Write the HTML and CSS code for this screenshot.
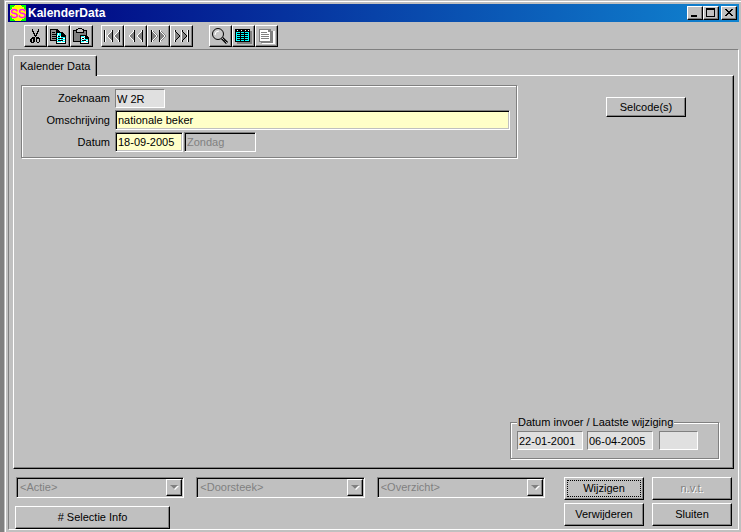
FILE: index.html
```html
<!DOCTYPE html>
<html lang="nl">
<head>
    <meta charset="utf-8">
    <title>KalenderData</title>
    <link rel="stylesheet" href="styles.css">
</head>
<body>
    <div class="window">
        <header class="titlebar">
            <svg class="logo" viewBox="0 0 16 16">
                <rect width="16" height="16" fill="#0f0"/>
                <circle cx="8" cy="8" r="8" fill="#ff0"/>
                <text x="0" y="13">SS</text>
            </svg>
            <h1>KalenderData</h1>
            <div class="caption-buttons">
                <button type="button" aria-label="Minimaliseren"><svg width="12" height="10" viewBox="0 0 12 10"><path d="M2 7h6v2H2z"/></svg></button>
                <button type="button" aria-label="Maximaliseren"><svg width="12" height="10" viewBox="0 0 12 10"><path fill-rule="evenodd" d="M1 0h9v9H1zM2 2v6h7V2z"/></svg></button>
                <button type="button" class="close" aria-label="Sluiten"><svg width="12" height="10" viewBox="0 0 12 10"><path d="M2 1h2v1h1v1h2V2h1V1h2v1H9v1H8v1H7v1h1v1h1v1h1v1H8V7H7V6H5v1H4v1H2V7h1V6h1V5h1V4H4V3H3V2H2z"/></svg></button>
            </div>
        </header>

        <div class="toolbar">
            <div class="tool-group">
                <button type="button" aria-label="Knippen">
                    <svg viewBox="0 0 19 18">
                        <path d="M6 2h1v2h1v2h1v2h1V6h1V4h1V2h1v3h-1v2h-1v2h-1v1H9V9H8V7H7V5H6z"/>
                        <path fill-rule="evenodd" d="M6 10h3v5H8v1H5v-1H4v-3h1v-1h1zM6 12v3h1v-3zM10 10h3v1h1v4h-1v1h-2v-1h-1zM11 12v3h2v-3z"/>
                    </svg>
                </button>
                <button type="button" aria-label="Kopiëren">
                    <svg viewBox="0 0 19 18">
                        <path d="M1 2h7l3 3v9H1z"/>
                        <path fill="#909090" d="M2 3h5v3h3v7H2z"/>
                        <path d="M3 5h3v1H3zM3 7h5v1H3zM3 9h5v1H3zM3 11h5v1H3z"/>
                        <path d="M7 5h6l4 4v8H7z"/>
                        <path fill="#fff" d="M8 6h4v4h4v6H8z"/>
                        <path fill="#0ff" d="M8 6h1v2H8zM10 6h2v2h-2zM9 8h3v1H9zM8 10h3v1H8zM12 10h4v1h-4zM8 12h3v1H8zM12 12h4v1h-4zM8 14h4v1H8zM13 14h3v1h-3z"/>
                        <path d="M9 9h2v1H9zM9 11h5v1H9zM9 13h5v1H9z"/>
                    </svg>
                </button>
                <button type="button" aria-label="Plakken">
                    <svg viewBox="0 0 19 18">
                        <path d="M1 3h14v12H1z"/>
                        <path fill="#808080" d="M2 4h12v10H2z"/>
                        <path d="M6 1h4v1h2v4H4V2h2z"/>
                        <path fill="#c0c0c0" d="M6 2h4v1h1v2H5V3h1z"/>
                        <path d="M8 8h6l3 3v6H8z"/>
                        <path fill="#fff" d="M9 9h4v3h3v4H9z"/>
                        <path fill="#0ff" d="M9 9h3v1H9zM12 10h1v1h-1zM9 12h1v1H9zM12 12h4v1h-4zM9 14h3v1H9zM14 14h2v1h-2z"/>
                        <path d="M10 11h2v1h-2zM10 13h4v1h-4z"/>
                    </svg>
                </button>
            </div>
            <div class="tool-group">
                <button type="button" aria-label="Eerste">
                    <svg viewBox="0 0 19 18">
                        <path fill="#808080" d="M9 3v12L3 9zM16 3v12l-6-6z"/>
                        <path d="M1 3h1v12H1zM9 3h1v12H9zM16 3h1v12h-1z"/>
                        <path class="light" d="M2 3h1v12H2zM8 3h1v2H8zM7 5h1v1H7zM6 6h1v1H6zM5 7h1v1H5zM4 8h1v2H4zM5 10h1v1H5zM6 11h1v1H6zM7 12h1v1H7zM8 13h1v2H8zM15 3h1v2h-1zM14 5h1v1h-1zM13 6h1v1h-1zM12 7h1v1h-1zM11 8h1v2h-1zM12 10h1v1h-1zM13 11h1v1h-1zM14 12h1v1h-1zM15 13h1v2h-1z"/>
                    </svg>
                </button>
                <button type="button" aria-label="Vorige">
                    <svg viewBox="0 0 19 18">
                        <path fill="#808080" d="M8 3v12L2 9zM16 3v12l-6-6z"/>
                        <path d="M8 3h1v12H8zM16 3h1v12h-1z"/>
                        <path class="light" d="M7 3h1v2H7zM6 5h1v1H6zM5 6h1v1H5zM4 7h1v1H4zM3 8h1v2H3zM4 10h1v1H4zM5 11h1v1H5zM6 12h1v1H6zM7 13h1v2H7zM15 3h1v2h-1zM14 5h1v1h-1zM13 6h1v1h-1zM12 7h1v1h-1zM11 8h1v2h-1zM12 10h1v1h-1zM13 11h1v1h-1zM14 12h1v1h-1zM15 13h1v2h-1z"/>
                    </svg>
                </button>
                <button type="button" aria-label="Volgende">
                    <svg viewBox="0 0 19 18">
                        <path fill="#808080" d="M3 3v12l6-6zM11 3v12l6-6z"/>
                        <path d="M2 3h1v12H2zM10 3h1v12h-1z"/>
                        <path class="light" d="M3 3h1v2H3zM4 5h1v1H4zM5 6h1v1H5zM6 7h1v1H6zM7 8h1v2H7zM6 10h1v1H6zM5 11h1v1H5zM4 12h1v1H4zM3 13h1v2H3zM11 3h1v2h-1zM12 5h1v1h-1zM13 6h1v1h-1zM14 7h1v1h-1zM15 8h1v2h-1zM14 10h1v1h-1zM13 11h1v1h-1zM12 12h1v1h-1zM11 13h1v2h-1z"/>
                    </svg>
                </button>
                <button type="button" aria-label="Laatste">
                    <svg viewBox="0 0 19 18">
                        <path fill="#808080" d="M3 3v12l5-6zM10 3v12l5-6z"/>
                        <path class="light" d="M2 3h1v12H2zM9 3h1v12H9zM15 3h1v12h-1z"/>
                        <path d="M3 3h1v2H3zM4 5h1v1H4zM5 6h1v1H5zM6 7h1v1H6zM7 8h1v2H7zM6 10h1v1H6zM5 11h1v1H5zM4 12h1v1H4zM3 13h1v2H3zM10 3h1v2h-1zM11 5h1v1h-1zM12 6h1v1h-1zM13 7h1v1h-1zM14 8h1v2h-1zM13 10h1v1h-1zM12 11h1v1h-1zM11 12h1v1h-1zM10 13h1v2h-1zM16 3h1v12h-1z"/>
                    </svg>
                </button>
            </div>
            <div class="tool-group">
                <button type="button" aria-label="Zoeken">
                    <svg class="smooth" viewBox="0 0 19 18">
                        <path stroke="#000" stroke-width="3" d="M11 11l5 5"/>
                        <path stroke="#fff" stroke-dasharray="1 1" d="M11 11l5 5"/>
                        <circle cx="7" cy="7" r="5.5" fill="#c8c8c8" stroke="#000"/>
                        <path fill="none" stroke="#fff" d="M4 8a4 4 0 0 1 4-4"/>
                    </svg>
                </button>
                <button type="button" aria-label="Tabel">
                    <svg viewBox="0 0 19 18">
                        <path fill="#808080" d="M3 4h15v13H3z"/>
                        <path d="M1 2h15v13H1z"/>
                        <path fill="#fff" d="M3 3h1v1H3zM7 3h1v1H7zM11 3h1v1h-1zM14 3h1v1h-1z"/>
                        <path fill="#0ff" d="M2 5h13v9H2z"/>
                        <path d="M3 6h3v1H3zM7 6h3v1H7zM11 6h3v1h-3zM3 8h3v1H3zM7 8h3v1H7zM11 8h3v1h-3zM3 10h3v1H3zM7 10h3v1H7zM11 10h3v1h-3zM3 12h3v1H3zM7 12h3v1H7zM11 12h3v1h-3zM6 5h1v9H6zM10 5h1v9h-1z"/>
                    </svg>
                </button>
                <button type="button" aria-label="Lijst" disabled>
                    <svg viewBox="0 0 19 18">
                        <path class="light" d="M5 4h13v13H5z"/>
                        <path fill="#808080" d="M4 4h12v12H4zM2 2h12v13H2z"/>
                        <path class="light" d="M3 3h10v11H3z"/>
                        <path fill="#808080" d="M4 5h6v1H4zM4 7h8v1H4zM4 9h8v1H4zM4 11h8v1H4zM11 3h2v2h-2z"/>
                    </svg>
                </button>
            </div>
        </div>

        <main class="client">
            <div class="tabs" role="tablist">
                <button type="button" class="tab" role="tab" aria-selected="true">Kalender Data</button>
            </div>
            <section class="panel">
                <div class="panel-top">
                    <div class="group">
                        <label for="zoeknaam">Zoeknaam</label>
                        <input id="zoeknaam" class="flat short" type="text" value="W 2R" readonly>
                        <label for="omschrijving">Omschrijving</label>
                        <input id="omschrijving" type="text" value="nationale beker">
                        <label for="datum">Datum</label>
                        <div class="date-row">
                            <input id="datum" class="date" type="text" value="18-09-2005">
                            <input class="day" type="text" value="Zondag" aria-label="Dag" disabled>
                        </div>
                    </div>
                    <button type="button" class="button selcode">Selcode(s)</button>
                </div>
                <fieldset class="changes">
                    <legend>Datum invoer / Laatste wijziging</legend>
                    <input class="flat" type="text" value="22-01-2001" aria-label="Datum invoer" readonly>
                    <input class="flat" type="text" value="06-04-2005" aria-label="Laatste wijziging" readonly>
                    <input class="flat initials" type="text" value="" aria-label="Gebruiker" readonly>
                </fieldset>
            </section>

            <footer class="footer">
                <div class="choices">
                    <div class="combos">
                        <div class="combo">
                            <select aria-label="Actie" disabled><option>&lt;Actie&gt;</option></select>
                            <span class="arrow"></span>
                        </div>
                        <div class="combo">
                            <select aria-label="Doorsteek" disabled><option>&lt;Doorsteek&gt;</option></select>
                            <span class="arrow"></span>
                        </div>
                        <div class="combo">
                            <select aria-label="Overzicht" disabled><option>&lt;Overzicht&gt;</option></select>
                            <span class="arrow"></span>
                        </div>
                    </div>
                    <button type="button" class="button info"># Selectie Info</button>
                </div>
                <div class="actions">
                    <button type="button" class="button default">Wijzigen</button>
                    <button type="button" class="button" disabled>n.v.t.</button>
                    <button type="button" class="button">Verwijderen</button>
                    <button type="button" class="button">Sluiten</button>
                </div>
            </footer>
        </main>
    </div>
</body>
</html>
```
FILE: styles.css
```css
* {
    box-sizing: border-box;
}
body {
    margin: 0;
    min-height: 100vh;
    display: flex;
    background: #c0c0c0;
    border-left: 4px solid #808080;
    color: #000;
}
body, button, input, select {
    font-family: "Liberation Sans", Arial, sans-serif;
    font-size: 11px;
    line-height: 13px;
}
button {
    padding: 0;
    color: #000;
    background: #c0c0c0;
    border: 1px solid;
    border-color: #fff #000 #000 #fff;
    box-shadow: inset -1px -1px #808080;
}
svg {
    display: block;
    shape-rendering: crispEdges;
}
.smooth {
    shape-rendering: auto;
}
.light {
    fill: #fff;
}

.window {
    flex: 1;
    display: flex;
    flex-direction: column;
    margin: 1px 0 0 1px;
    padding: 2px;
    border-top: 1px solid #fff;
    border-left: 1px solid #fff;
}

/* title bar */
.titlebar {
    display: flex;
    align-items: center;
    height: 18px;
    padding: 0 2px;
    background: linear-gradient(to right, #000080, #1084d0);
    color: #fff;
}
.logo {
    width: 16px;
    height: 16px;
}
.logo text {
    font-size: 12px;
    fill: #f0f;
    stroke: #f0f;
    stroke-width: .4px;
}
h1 {
    flex: 1;
    margin: 0 0 0 2px;
    font-size: 12px;
    line-height: 18px;
}
.caption-buttons {
    display: flex;
}
.caption-buttons button {
    width: 16px;
    height: 14px;
    padding: 1px;
}
.caption-buttons .close {
    margin-left: 2px;
}

/* toolbar */
.toolbar {
    display: flex;
    gap: 8px;
    padding: 3px 16px 2px;
}
.tool-group {
    display: flex;
}
.tool-group:last-child {
    margin-left: 8px;
}
.toolbar button {
    width: 23px;
    height: 22px;
    padding: 1px;
}
.toolbar svg {
    width: 19px;
    height: 18px;
}

/* tab and page */
.client {
    flex: 1;
    display: flex;
    flex-direction: column;
    padding: 5px 4px 0;
    border: 1px solid;
    border-color: #808080 #fff #fff #808080;
}
.tab {
    position: relative;
    display: block;
    height: 21px;
    margin-bottom: -1px;
    padding: 0 6px;
    border-bottom: 0;
    border-radius: 2px 2px 0 0;
    box-shadow: inset -1px 0 #808080;
}
.panel {
    flex: 1;
    display: flex;
    flex-direction: column;
    justify-content: space-between;
    padding: 9px 14px 9px 7px;
    border: 1px solid;
    border-color: #fff #000 #000 #fff;
    box-shadow: inset -1px -1px #808080;
}
.panel-top {
    display: flex;
    justify-content: space-between;
}
.group {
    flex: 1;
    max-width: 496px;
    display: grid;
    grid-template-columns: 88px 1fr;
    gap: 2px 5px;
    align-items: center;
    padding: 3px 6px 5px 0;
    border: 1px solid #808080;
    box-shadow: 1px 1px #fff, inset 1px 1px #fff;
}
.group label {
    text-align: right;
}
.selcode {
    width: 80px;
    height: 20px;
    margin: 12px 33px 0 16px;
}

/* fields */
input {
    height: 20px;
    min-width: 0;
    padding: 0 2px;
    color: #000;
    background: #ffffc8;
    border: 1px solid;
    border-color: #808080 #fff #fff #808080;
    border-radius: 0;
    box-shadow: inset 1px 1px #000, inset -1px -1px #c0c0c0;
}
.flat {
    width: 66px;
    height: 19px;
    padding: 0 1px;
    background: #e0e0e0;
    box-shadow: none;
}
.short {
    width: 50px;
}
.date-row {
    display: flex;
    gap: 1px;
}
.date {
    width: 68px;
}
.day {
    width: 72px;
}
.day:disabled {
    color: #808080;
    background: #c0c0c0;
}
.changes {
    align-self: flex-end;
    display: flex;
    gap: 4px;
    width: 209px;
    margin: 0;
    padding: 2px 6px 8px;
    border: 1px solid #808080;
    box-shadow: 1px 1px #fff, inset 1px 1px #fff;
}
.changes legend {
    padding: 0 1px;
    background: #c0c0c0;
}
.initials {
    width: 39px;
    margin-left: 2px;
}

/* bottom bar */
.footer {
    display: flex;
    justify-content: space-between;
    gap: 16px;
    padding: 8px 2px 0;
}
.choices {
    flex: 1;
    max-width: 530px;
}
.combos {
    display: flex;
    gap: 12px;
    margin-bottom: 8px;
    padding-left: 1px;
}
.combo {
    position: relative;
    flex: 1;
}
.combo select {
    display: block;
    width: 100%;
    height: 21px;
    padding: 0 20px 0 3px;
    appearance: none;
    color: #808080;
    opacity: 1;
    background: #c0c0c0;
    border: 1px solid;
    border-color: #808080 #fff #fff #808080;
    border-radius: 0;
    box-shadow: inset 1px 1px #000;
}
.arrow {
    position: absolute;
    top: 2px;
    right: 2px;
    width: 16px;
    height: 17px;
    background: #c0c0c0;
    border: 1px solid;
    border-color: #fff #000 #000 #fff;
    box-shadow: inset -1px -1px #808080;
    pointer-events: none;
}
.arrow::after {
    content: "";
    position: absolute;
    top: 5px;
    left: 3px;
    border: 4px solid transparent;
    border-top-color: #808080;
    border-bottom: 0;
    filter: drop-shadow(1px 1px #fff);
}
.info {
    display: block;
    width: 155px;
    height: 23px;
}
.actions {
    display: grid;
    grid-template-columns: 80px 80px;
    grid-auto-rows: 23px;
    gap: 3px 8px;
}
.button:disabled {
    color: #808080;
    text-shadow: 1px 1px #fff;
}
.default {
    outline: 1px dotted #000;
    outline-offset: -4px;
}
```
